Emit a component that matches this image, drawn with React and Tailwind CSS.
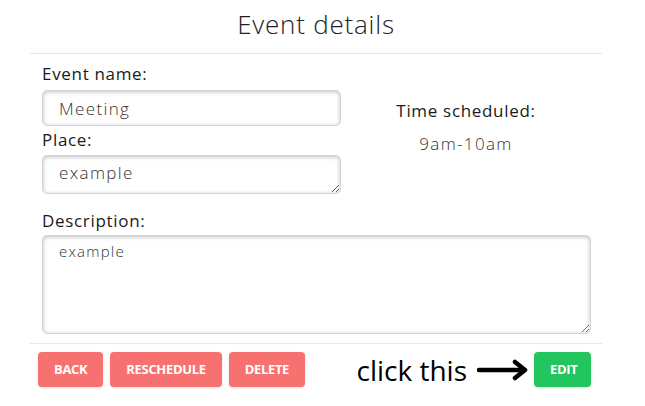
import React from 'react';

const font = { fontFamily: '"Open Sans", "Liberation Sans", sans-serif' };

const fieldCls =
  'block w-full rounded-[5px] border border-gray-300 bg-white px-4 font-light text-[#333] tracking-[0.08em] outline-none shadow-[inset_0_1px_4px_rgba(0,0,0,0.25)]';

const labelCls = 'h-[24px] text-[17px] leading-[24px] font-medium tracking-[0.04em]';

const btnCls =
  'h-[35px] px-[16px] rounded-[4px] text-white text-[13px] font-bold tracking-tight shadow';

const Arrow = () => (
  <svg width="52" height="22" viewBox="0 0 52 22" className="block">
    <path d="M2 11 H46" stroke="#000" strokeWidth="4.5" strokeLinecap="round" />
    <path d="M38 3 L48 11 L38 19" fill="none" stroke="#000" strokeWidth="4.5" strokeLinecap="round" strokeLinejoin="round" />
  </svg>
);

const App = () => {
  return (
    <div className="min-h-screen bg-white text-[#1a1a1a] font-['Open_Sans','Liberation_Sans',sans-serif]">
      <div className="ml-[30px] w-[572px]">
        <div className="h-[54px] pb-[4px] border-b border-gray-200 flex items-center justify-center text-[26px] font-light tracking-[0.03em] text-[#222]">
          Event details
        </div>

        <div className="pl-3 pr-[11px] pt-[8px]">
          <div className="flex">
            <div className="w-[299px]">
              <div className={labelCls}>Event name:</div>
              <input
                readOnly
                value="Meeting"
                className={`${fieldCls} mt-[4px] h-[36px] text-[17px]`}
              />
              <div className={`${labelCls} mt-[2px]`}>Place:</div>
              <textarea
                readOnly
                rows={1}
                value="example"
                className={`${fieldCls} mt-[3px] h-[39px] py-[5px] resize-y text-[17px] leading-[24px]`}
              />
            </div>
            <div className="flex-1 flex flex-col items-center pt-[37px]">
              <div className="text-[17px] leading-[24px] font-medium tracking-[0.04em]">Time scheduled:</div>
              <div className="mt-[9px] text-[17px] leading-[24px] font-light tracking-[0.08em] text-[#333]">9am-10am</div>
            </div>
          </div>

          <div className={`${labelCls} mt-[15px]`}>Description:</div>
          <textarea
            readOnly
            value="example"
            className={`${fieldCls} mt-[2px] h-[99px] py-[3px] resize-y text-[15px] leading-[24px]`}
          />
        </div>

        <div className="mt-[9px] border-t border-gray-200 pl-2 pr-[11px] pt-[8px] flex items-center">
          <div className="flex gap-[7px]">
            <button className={`${btnCls} bg-[#f87171]`}>BACK</button>
            <button className={`${btnCls} bg-[#f87171]`}>RESCHEDULE</button>
            <button className={`${btnCls} bg-[#f87171]`}>DELETE</button>
          </div>
          <div className="ml-auto flex items-center">
            <span className="text-[28px] leading-none text-black mr-[10px]" style={font}>click this</span>
            <Arrow />
            <button className={`${btnCls} ml-[5px] w-[57px] px-0 bg-[#22c55e]`}>EDIT</button>
          </div>
        </div>
      </div>
    </div>
  );
};

export default App;
